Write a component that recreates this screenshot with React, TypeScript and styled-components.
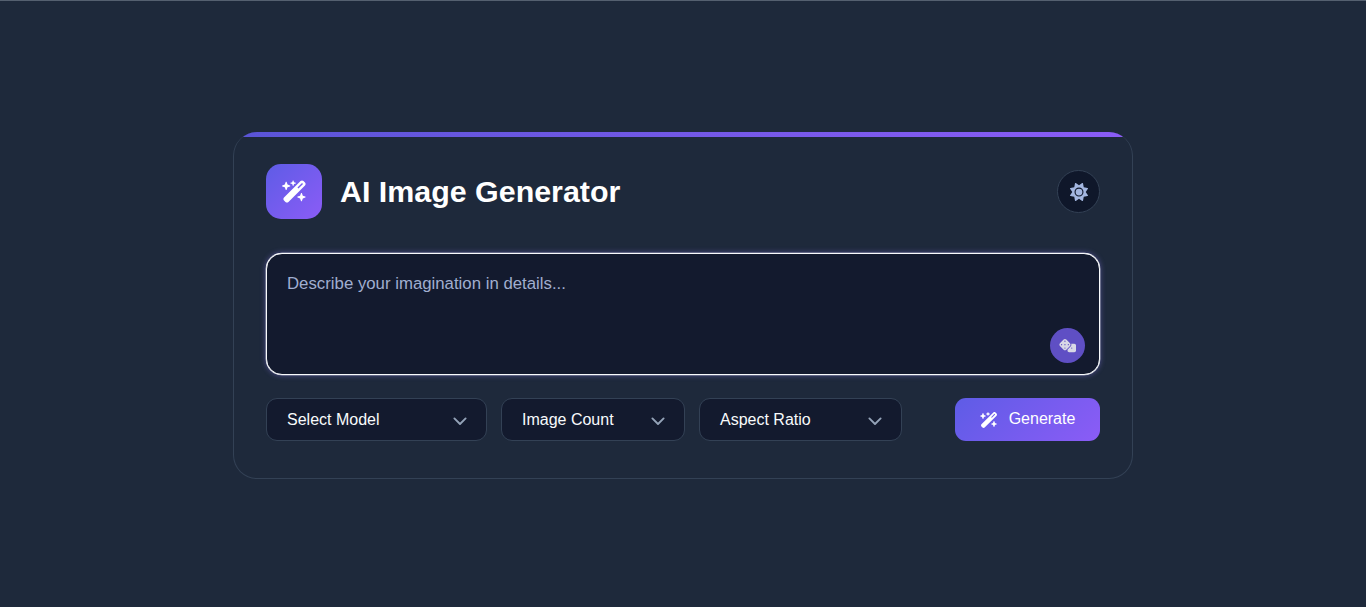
import * as React from 'react'
import styled, { createGlobalStyle } from 'styled-components'
import { FaWandMagicSparkles, FaSun, FaDice } from 'react-icons/fa6'

const GlobalStyle = createGlobalStyle`
  * {
    box-sizing: border-box;
  }
  html,
  body {
    margin: 0;
    height: 100%;
  }
  body {
    background: #1e293b;
    font-family: 'Liberation Sans', Arial, sans-serif;
    overflow: hidden;
  }
`

const Page = styled.div`
  height: 607px;
  border-top: 1px solid #556070;
  display: flex;
  justify-content: center;
  padding-top: 131px;
`

const Card = styled.div`
  position: relative;
  width: 900px;
  height: 347px;
  padding: 32px 32px 0;
  background: #1e293b;
  border: 1px solid #334155;
  border-top: none;
  border-radius: 24px;
  overflow: hidden;

  &::before {
    content: '';
    position: absolute;
    top: 0;
    left: 0;
    right: 0;
    height: 5px;
    background: linear-gradient(90deg, #5a54d6, #8b5cf6);
  }
`

const Header = styled.header`
  display: flex;
  align-items: center;
  justify-content: space-between;
  height: 55px;
  margin-bottom: 34px;
`

const Brand = styled.div`
  display: flex;
  align-items: center;
  gap: 18px;
`

const LogoBox = styled.div`
  width: 56px;
  height: 55px;
  border-radius: 15px;
  display: flex;
  align-items: center;
  justify-content: center;
  color: #fff;
  font-size: 25px;
  background: linear-gradient(135deg, #5e5ce6, #8b5cf6);
`

const Title = styled.h1`
  margin: 0;
  color: #fff;
  font-size: 30.4px;
  font-weight: 700;
`

const ThemeToggle = styled.button`
  width: 43px;
  height: 43px;
  padding: 0;
  border-radius: 50%;
  border: 1px solid #334155;
  background: #0f172a;
  color: #a3b6e0;
  display: flex;
  align-items: center;
  justify-content: center;
  font-size: 18px;
`

const PromptBox = styled.div`
  position: relative;
  height: 122px;
  margin-bottom: 23px;
`

const Prompt = styled.textarea`
  display: block;
  width: 100%;
  height: 100%;
  padding: 20px;
  resize: none;
  border: 1px solid #f8fafc;
  border-radius: 16px;
  outline: none;
  background: #131a2e;
  color: #fff;
  font-family: inherit;
  font-size: 16.8px;
  line-height: 20px;
  box-shadow: 0 0 0 0.3px #f8fafc, 0 0 5px 1px rgba(139, 124, 246, 0.35);

  &::placeholder {
    color: #a0aed0;
    opacity: 1;
  }
`

const DiceButton = styled.button`
  position: absolute;
  right: 15px;
  bottom: 12px;
  width: 35px;
  height: 35px;
  padding: 0;
  border: none;
  border-radius: 50%;
  background: #5f4fc4;
  color: #d8d8e6;
  display: flex;
  align-items: center;
  justify-content: center;
  font-size: 17px;
`

const Controls = styled.div`
  display: flex;
  align-items: center;
  justify-content: space-between;
`

const Selects = styled.div`
  display: flex;
  gap: 14px;
`

const SelectBox = styled.div<{ $width: number }>`
  width: ${({ $width }) => $width}px;
  height: 43px;
  padding: 0 17px 0 20px;
  display: flex;
  align-items: center;
  justify-content: space-between;
  color: #f8fafc;
  font-size: 16px;
  background: #131a2e;
  border: 1px solid #334155;
  border-radius: 11px;
`

const Chevron = styled.svg`
  width: 18px;
  height: 18px;
  margin-top: 2px;
  fill: none;
  stroke: #94a3b8;
  stroke-width: 2.5;
  stroke-linecap: round;
  stroke-linejoin: round;
`

const GenerateButton = styled.button`
  width: 145px;
  height: 43px;
  padding: 0 0 2px;
  border: none;
  border-radius: 11px;
  display: flex;
  align-items: center;
  justify-content: center;
  gap: 11px;
  color: #fff;
  font-family: inherit;
  font-size: 16px;
  background: linear-gradient(135deg, #5e5ce6, #8b5cf6);

  & > svg {
    font-size: 18px;
    margin-top: 2px;
  }
`

const selects = [
  { label: 'Select Model', width: 221 },
  { label: 'Image Count', width: 184 },
  { label: 'Aspect Ratio', width: 203 },
]

export default function App() {
  return (
    <Page>
      <GlobalStyle />
      <Card>
        <Header>
          <Brand>
            <LogoBox>
              <FaWandMagicSparkles />
            </LogoBox>
            <Title>AI Image Generator</Title>
          </Brand>
          <ThemeToggle aria-label="Toggle theme">
            <FaSun />
          </ThemeToggle>
        </Header>
        <PromptBox>
          <Prompt placeholder="Describe your imagination in details..." />
          <DiceButton aria-label="Random prompt">
            <FaDice />
          </DiceButton>
        </PromptBox>
        <Controls>
          <Selects>
            {selects.map((s) => (
              <SelectBox key={s.label} $width={s.width}>
                {s.label}
                <Chevron viewBox="0 0 24 24">
                  <path d="M4.5 8.5l7.5 7.5 7.5-7.5" />
                </Chevron>
              </SelectBox>
            ))}
          </Selects>
          <GenerateButton>
            <FaWandMagicSparkles />
            Generate
          </GenerateButton>
        </Controls>
      </Card>
    </Page>
  )
}
